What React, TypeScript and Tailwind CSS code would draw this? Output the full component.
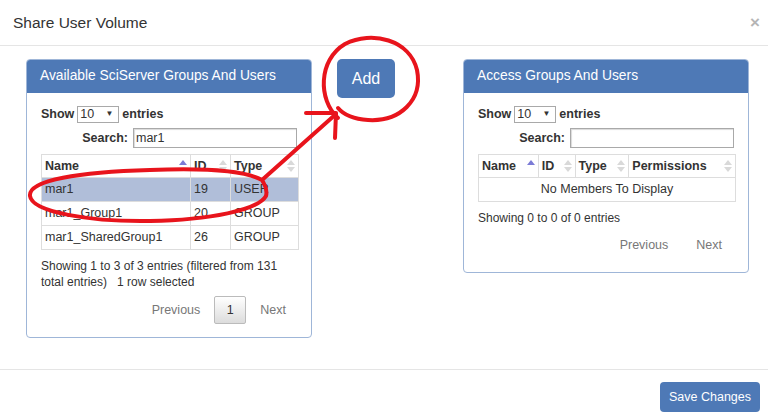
import React from "react";

const font = { fontFamily: '"Liberation Sans", Arial, sans-serif' };

function SortIcon({ active }: { active?: boolean }) {
   return (
      <svg width="8" height="12" viewBox="0 0 8 12" className="shrink-0">
         <polygon points="4,0 8,5 0,5" fill={active ? "#7b7bd6" : "#d9d9d9"} />
         <polygon points="0,7 8,7 4,12" fill={active ? "#ffffff" : "#d9d9d9"} />
      </svg>
   );
}

function LengthRow() {
   return (
      <div className="flex items-center gap-[3px] text-[12.5px] font-bold text-[#333] h-[20px]">
         <span>Show</span>
         <span className="flex items-center justify-between w-[42px] h-[17px] border border-[#a9a9a9] px-[2px] font-normal text-[12.5px]">
            <span>10</span>
            <span className="text-[8px] mr-[3px]">▼</span>
         </span>
         <span>entries</span>
      </div>
   );
}

function SearchRow({ value }: { value: string }) {
   return (
      <div className="flex items-center justify-end gap-[5px] mt-[4px] text-[12.5px] font-bold text-[#333]">
         <span>Search:</span>
         <div className="w-[164px] h-[20px] border border-[#a9a9a9] shadow-[inset_1px_1px_1px_rgba(0,0,0,0.15)] px-[2px] font-normal leading-[18px]">
            {value}
         </div>
      </div>
   );
}

function Th({ label, width, active }: { label: string; width: string; active?: boolean }) {
   return (
      <th className={`${width} border border-[#dddddd] px-[3px] h-[23px] text-left font-bold text-[12.5px] text-[#333]`}>
         <div className="flex items-center justify-between">
            <span>{label}</span>
            <SortIcon active={active} />
         </div>
      </th>
   );
}

function Panel({ title, children, height }: { title: string; children: React.ReactNode; height: string }) {
   return (
      <div className={`w-[286px] ${height} border border-[#9fb6d8] rounded-[4px] overflow-hidden flex flex-col`}>
         <div className="h-[33px] bg-[#4e79b6] text-white text-[13.8px] flex items-center pl-[13px] shrink-0">{title}</div>
         <div className="px-[14px] pt-[11px]">{children}</div>
      </div>
   );
}

export default function App() {
   const rows = [
      { name: "mar1", id: "19", type: "USER", selected: true },
      { name: "mar1_Group1", id: "20", type: "GROUP" },
      { name: "mar1_SharedGroup1", id: "26", type: "GROUP" },
   ];

   return (
      <div className="w-[768px] h-[416px] bg-white relative overflow-hidden" style={font}>
         {/* header */}
         <div className="h-[46px] flex items-center justify-between pl-[13px] pr-[8px] border-b border-[#e5e5e5]">
            <span className="text-[15.5px] text-[#333]">Share User Volume</span>
            <span className="text-[17px] font-bold text-[#b5b5b5] leading-none">×</span>
         </div>

         {/* body */}
         <div className="h-[323px] flex items-start pt-[13px] pl-[26px]">
            <Panel title="Available SciServer Groups And Users" height="h-[279px]">
               <LengthRow />
               <SearchRow value="mar1" />
               <table className="w-[258px] mt-[6px] border-collapse text-[12.5px] text-[#333]">
                  <thead>
                     <tr>
                        <Th label="Name" width="w-[149px]" active />
                        <Th label="ID" width="w-[40px]" />
                        <Th label="Type" width="w-[68px]" />
                     </tr>
                  </thead>
                  <tbody>
                     {rows.map(r => (
                        <tr key={r.name} className={r.selected ? "bg-[#b0bed9]" : "bg-white"}>
                           <td className="border border-[#dddddd] px-[3px] h-[24px]">{r.name}</td>
                           <td className="border border-[#dddddd] px-[3px]">{r.id}</td>
                           <td className="border border-[#dddddd] px-[3px]">{r.type}</td>
                        </tr>
                     ))}
                  </tbody>
               </table>
               <div className="mt-[8px] text-[12px] leading-[16px] text-[#333]">
                  <div>Showing 1 to 3 of 3 entries (filtered from 131</div>
                  <div className="flex gap-[10px]">
                     <span>total entries)</span>
                     <span>1 row selected</span>
                  </div>
               </div>
               <div className="flex items-center justify-end gap-[14px] mt-[6px] pr-[11px] text-[12.5px]">
                  <span className="text-[#777]">Previous</span>
                  <span className="w-[32px] h-[28px] flex items-center justify-center border border-[#bbbbbb] rounded-[2px] bg-gradient-to-b from-[#ffffff] to-[#dcdcdc] text-[#333]">1</span>
                  <span className="text-[#777]">Next</span>
               </div>
            </Panel>

            <div className="ml-[25px] w-[58px] h-[39px] rounded-[5px] bg-[#4e79b6] text-white text-[16px] flex items-center justify-center">
               Add
            </div>

            <div className="ml-[68px]">
               <Panel title="Access Groups And Users" height="h-[214px]">
                  <LengthRow />
                  <SearchRow value="" />
                  <table className="w-[258px] mt-[6px] border-collapse text-[12.5px] text-[#333]">
                     <thead>
                        <tr>
                           <Th label="Name" width="w-[60px]" active />
                           <Th label="ID" width="w-[37px]" />
                           <Th label="Type" width="w-[54px]" />
                           <Th label="Permissions" width="w-[107px]" />
                        </tr>
                     </thead>
                     <tbody>
                        <tr>
                           <td colSpan={4} className="border border-[#dddddd] h-[24px] text-center">No Members To Display</td>
                        </tr>
                     </tbody>
                  </table>
                  <div className="mt-[8px] text-[12px] leading-[16px] text-[#333]">Showing 0 to 0 of 0 entries</div>
                  <div className="flex items-center justify-end gap-[28px] mt-[10px] pr-[12px] text-[12.5px] text-[#777]">
                     <span>Previous</span>
                     <span>Next</span>
                  </div>
               </Panel>
            </div>
         </div>

         {/* footer */}
         <div className="h-[47px] border-t border-[#e5e5e5] flex items-start justify-end pt-[12px] pr-[8px]">
            <div className="w-[100px] h-[30px] rounded-[4px] bg-[#4e79b6] text-white text-[12.5px] flex items-center justify-center">
               Save Changes
            </div>
         </div>

         {/* hand-drawn annotations */}
         <svg className="absolute left-0 top-0 pointer-events-none" width="768" height="416" viewBox="0 0 768 416">
            <g fill="none" stroke="#e8141c" strokeWidth="4" strokeLinecap="round" strokeLinejoin="round">
               <path d="M338 118 C 318 100, 318 60, 345 44 C 372 30, 410 40, 417 70 C 423 100, 400 122, 368 120 C 352 119, 343 114, 338 108" />
               <path d="M262 180 C 244 170, 200 168, 150 170 C 80 172, 28 180, 30 196 C 32 212, 90 222, 150 221 C 210 220, 258 210, 266 196 C 268 188, 264 184, 262 180 L 336 114" />
               <path d="M306 113 L 336 113 L 335 138" />
            </g>
         </svg>
      </div>
   );
}
